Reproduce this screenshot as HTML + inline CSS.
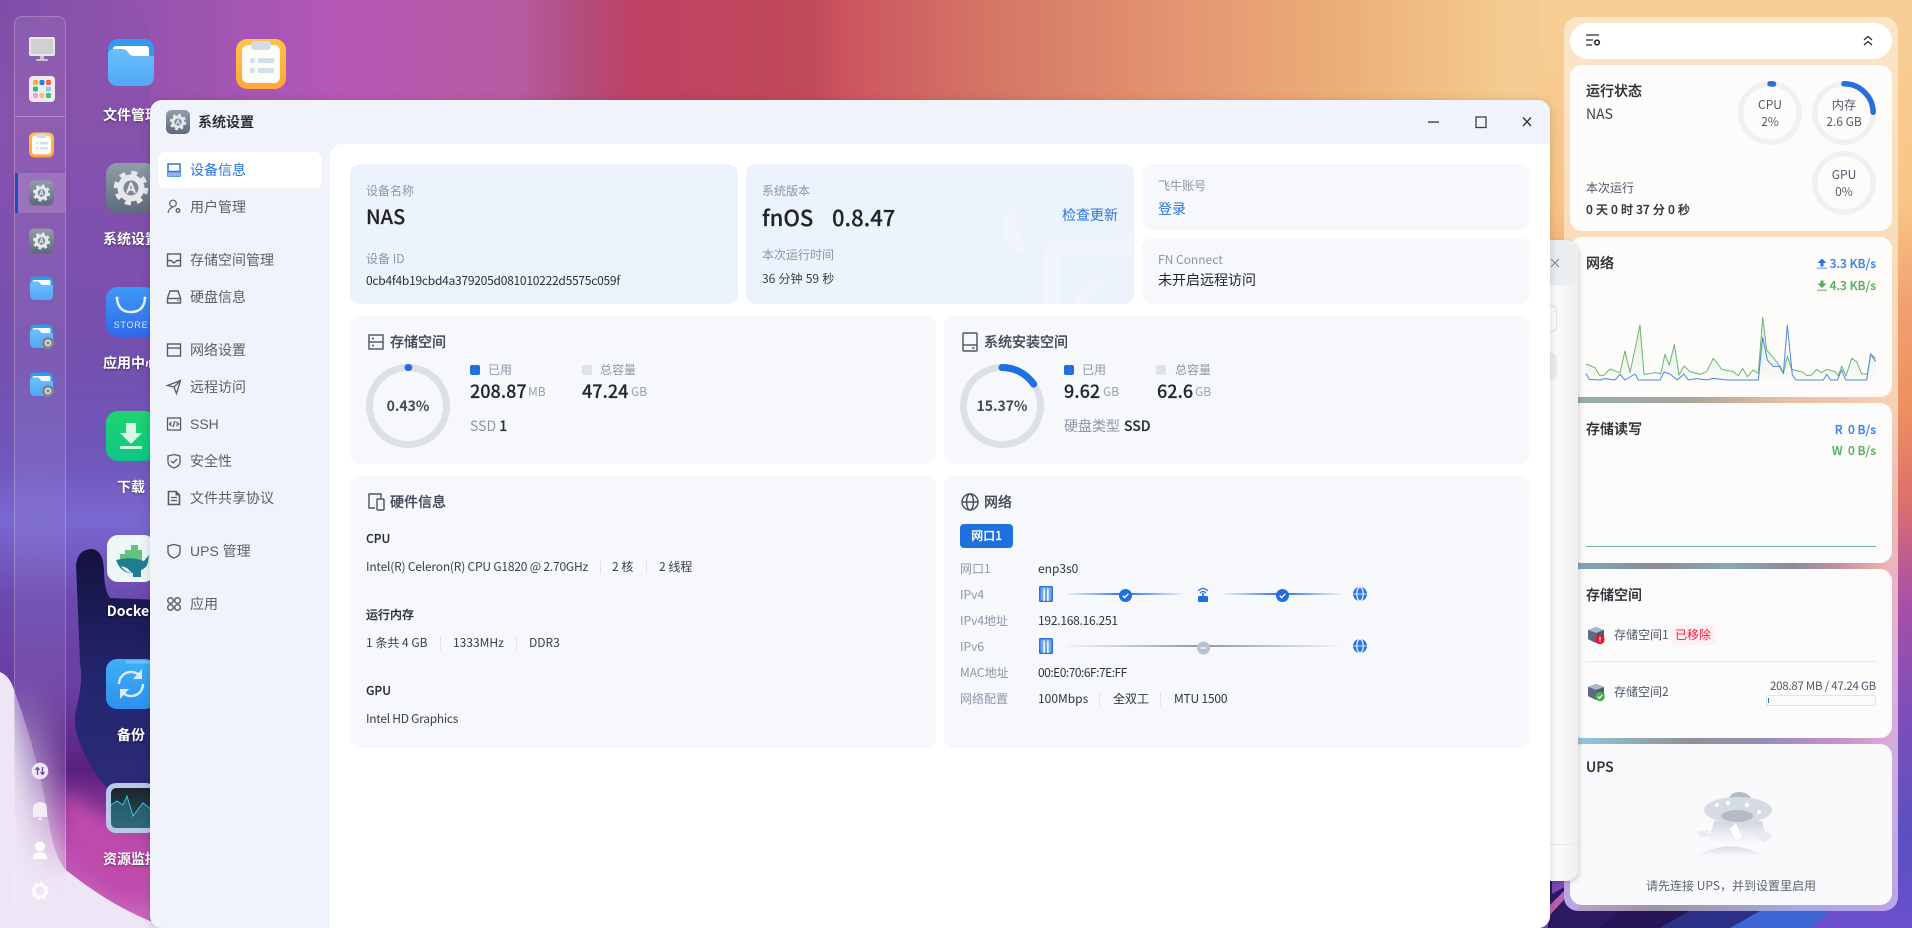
<!DOCTYPE html>
<html lang="zh-CN"><head><meta charset="utf-8"><title>系统设置</title>
<style>
*{box-sizing:border-box}
html,body{margin:0;padding:0;width:1912px;height:928px;overflow:hidden;background:#7b50aa}
body{position:relative;font-family:"Noto Sans CJK SC","Liberation Sans",sans-serif;font-size:12px;color:#2a2f38}
.a{position:absolute}
.t{position:absolute;line-height:20px;height:20px;white-space:nowrap}
svg{position:absolute;overflow:visible}
.lb{color:#fff;font-size:14px;font-weight:700;text-shadow:0 1px 2px rgba(0,0,0,.45);width:100px;text-align:center;left:81px}
.g{color:#8c96a6}
.n{font-size:14px;color:#5b616c;left:190px;font-family:"Liberation Sans","Noto Sans CJK SC",sans-serif}
.card{position:absolute;border-radius:10px;background:#f6f8fc}
.h{font-size:14px;font-weight:500;color:#434a57}
.v{font-size:18px;font-weight:500;color:#222831}
.u{font-size:12px;color:#97a1b0}
.sq{position:absolute;width:10px;height:10px;border-radius:2px}
.sep{position:absolute;width:1px;height:14px;background:#dfe3ea}
.w{position:absolute;left:1570px;width:322px;background:#fdfcfb;border-radius:12px}
.s{position:absolute;left:1578px;width:314px;height:7px}
.ti{font-size:14px;font-weight:500;color:#2c2f36;left:1586px}
.ri{color:#515a69;width:60px;text-align:center}
.h,.v,.ti,[style*="font-weight:500"]{-webkit-text-stroke:.18px currentColor}
.lsa{letter-spacing:-.2px}
</style></head><body>

<svg width="1912" height="928" style="left:0;top:0">
<defs>
<linearGradient id="bgH" x1="0" x2="1912" y1="0" y2="0" gradientUnits="userSpaceOnUse">
<stop offset="0" stop-color="#7c4ea8"/><stop offset=".08" stop-color="#9554ae"/><stop offset=".178" stop-color="#b558b6"/><stop offset=".272" stop-color="#b85aa0"/><stop offset=".3" stop-color="#b05080"/><stop offset=".332" stop-color="#c04065"/><stop offset=".422" stop-color="#c04a58"/><stop offset=".442" stop-color="#cc5560"/><stop offset=".523" stop-color="#d57865"/><stop offset=".605" stop-color="#e29270"/><stop offset=".706" stop-color="#ecb078"/><stop offset=".788" stop-color="#f4cb90"/><stop offset="1" stop-color="#f8cf92"/>
</linearGradient>
<linearGradient id="bgL" x1="0" x2="0" y1="0" y2="928" gradientUnits="userSpaceOnUse">
<stop offset="0" stop-color="#8752ac" stop-opacity="0"/><stop offset=".12" stop-color="#8752ac"/><stop offset=".27" stop-color="#7e50ae"/><stop offset=".38" stop-color="#7450ae"/><stop offset=".5" stop-color="#7058bc"/><stop offset=".56" stop-color="#7a68d0"/><stop offset=".65" stop-color="#6a48ae"/><stop offset=".75" stop-color="#6a3ca0"/><stop offset=".83" stop-color="#5a2080"/><stop offset=".92" stop-color="#b850b0"/><stop offset="1" stop-color="#cc6cbc"/>
</linearGradient>
<linearGradient id="bgR" x1="0" x2="0" y1="0" y2="928" gradientUnits="userSpaceOnUse">
<stop offset="0" stop-color="#f7cf96"/><stop offset=".22" stop-color="#f8c587"/><stop offset=".33" stop-color="#f0a070"/><stop offset=".44" stop-color="#ee9060"/><stop offset=".54" stop-color="#dc706c"/><stop offset=".65" stop-color="#a84fa8"/><stop offset=".76" stop-color="#7f4fb8"/><stop offset=".9" stop-color="#5a50c0"/><stop offset="1" stop-color="#6a50cc"/>
</linearGradient>
<linearGradient id="navy" x1="0" x2="0" y1="0" y2="1"><stop offset="0" stop-color="#14123e"/><stop offset=".5" stop-color="#232670"/><stop offset="1" stop-color="#2e2c78"/></linearGradient>
<linearGradient id="fold" x1="0" x2="0" y1="0" y2="1"><stop offset="0" stop-color="#6ac0fb"/><stop offset="1" stop-color="#52a8f5"/></linearGradient>
<linearGradient id="steel" x1="0" x2="0" y1="0" y2="1"><stop offset="0" stop-color="#929dab"/><stop offset="1" stop-color="#5e6a7b"/></linearGradient>
<linearGradient id="note" x1="0" x2="0" y1="0" y2="1"><stop offset="0" stop-color="#ffc347"/><stop offset="1" stop-color="#ffa63a"/></linearGradient>
<linearGradient id="store" x1="0" x2="0" y1="0" y2="1"><stop offset="0" stop-color="#3d9af7"/><stop offset="1" stop-color="#3069ea"/></linearGradient>
<linearGradient id="green" x1="0" x2="0" y1="0" y2="1"><stop offset="0" stop-color="#1fd56f"/><stop offset="1" stop-color="#0fc585"/></linearGradient>
<linearGradient id="bk" x1="0" x2="0" y1="0" y2="1"><stop offset="0" stop-color="#3fb0f8"/><stop offset="1" stop-color="#2f90ee"/></linearGradient>
<linearGradient id="mon" x1="0" x2="0" y1="0" y2="1"><stop offset="0" stop-color="#1b2429"/><stop offset="1" stop-color="#2a5566"/></linearGradient>
<linearGradient id="gf" x1="0" x2="0" y1="0" y2="1"><stop offset="0" stop-color="#5cae5f" stop-opacity=".22"/><stop offset="1" stop-color="#5cae5f" stop-opacity=".02"/></linearGradient>
<linearGradient id="beam" x1="0" x2="0" y1="0" y2="1"><stop offset="0" stop-color="#ccd3df"/><stop offset="1" stop-color="#ccd3df" stop-opacity="0"/></linearGradient>
<linearGradient id="gnd" x1="0" x2="0" y1="0" y2="1"><stop offset="0" stop-color="#d2d7e1"/><stop offset="1" stop-color="#d2d7e1" stop-opacity="0"/></linearGradient>
<filter id="b8" x="-50%" y="-50%" width="200%" height="200%"><feGaussianBlur stdDeviation="8"/></filter>

<symbol id="gear" viewBox="0 0 50 50">
<rect width="50" height="50" rx="11" fill="url(#steel)"/>
<circle cx="25" cy="25" r="15" fill="none" stroke="#e6e8ec" stroke-width="4.5" stroke-dasharray="5.9 5.9"/>
<circle cx="25" cy="25" r="13.5" fill="#e6e8ec"/>
<circle cx="25" cy="25" r="7.5" fill="#7d8999"/>
<path d="M25 19.5L21 30M25 19.5L29 30M22 27.5Q25 25.5 28 27.5" stroke="#e6e8ec" stroke-width="2" fill="none"/>
</symbol>
<symbol id="folder" viewBox="0 0 46 48">
<rect width="46" height="47" rx="10" fill="#2f9bf0"/>
<rect x="5" y="7" width="36" height="24" rx="3" fill="#fff"/>
<path d="M0 16Q0 10 6 10H14Q18 10 20 13Q22 17 26 17H46V37Q46 47 36 47H10Q0 47 0 37Z" fill="url(#fold)"/>
</symbol>
<symbol id="notes" viewBox="0 0 50 50">
<rect width="50" height="50" rx="11" fill="url(#note)"/>
<rect x="6" y="6" width="38" height="38" rx="6" fill="#fdfcf8"/>
<rect x="15" y="2" width="20" height="9" rx="4" fill="#cfdde8"/>
<rect x="14" y="19" width="5" height="5" rx="1.5" fill="#d2e0ec"/><rect x="22" y="19" width="16" height="5" rx="1.5" fill="#d2e0ec"/>
<rect x="14" y="29" width="5" height="5" rx="1.5" fill="#d2e0ec"/><rect x="22" y="29" width="16" height="5" rx="1.5" fill="#d2e0ec"/>
</symbol>
<symbol id="cube" viewBox="0 0 18 18">
<path d="M1 4L9 1L17 4V13L9 17L1 13Z" fill="#4f5a6c"/><path d="M1 4L9 1L17 4L9 7Z" fill="#a9bacb"/><path d="M9 7V17L1 13V4Z" fill="#5d6a7e"/>
</symbol>
<symbol id="port" viewBox="0 0 14 16">
<rect width="14" height="16" rx="1.5" fill="#2a74e0"/><rect x="1.5" y="1.5" width="11" height="13" fill="#cfe0f8"/><rect x="1.5" y="1.5" width="3" height="13" fill="#2a74e0" opacity=".55"/><rect x="5.8" y="1.5" width="2.4" height="13" fill="#2a74e0" opacity=".55"/><rect x="9.5" y="1.5" width="3" height="13" fill="#2a74e0" opacity=".55"/><rect x="4.4" y="4" width="1.4" height="11" fill="#fff"/><rect x="8.2" y="4" width="1.4" height="11" fill="#fff"/>
</symbol>
<symbol id="globe" viewBox="0 0 14 14">
<circle cx="7" cy="7" r="7" fill="#2a74e0"/><ellipse cx="7" cy="7" rx="3.2" ry="6.8" fill="none" stroke="#f6f8fc" stroke-width="1.2"/><path d="M0 7H14" stroke="#f6f8fc" stroke-width=".8"/>
</symbol>
<symbol id="check" viewBox="0 0 13 13">
<circle cx="6.5" cy="6.5" r="6.5" fill="#1f6fe0"/><path d="M3.7 6.7L5.7 8.6L9.3 4.8" fill="none" stroke="#fff" stroke-width="1.4"/>
</symbol>
</defs>

<rect width="1912" height="928" fill="url(#bgH)"/>
<rect x="0" y="0" width="150" height="928" fill="url(#bgL)"/>
<rect x="1540" y="0" width="372" height="928" fill="url(#bgR)"/>
<!-- magenta below swirl -->
<path d="M66 790Q110 830 150 840V900H120Q90 880 66 840Z" fill="#c048ac" filter="url(#b8)"/>
<!-- navy swirl -->
<path d="M76 565Q78 549 92 549Q103 550 104 570Q104 590 110 598L160 600V816Q120 805 100 780Q72 740 75 714Q84 680 80 664Q78 610 76 565Z" fill="url(#navy)"/>
<!-- pale blob bottom left -->
<path d="M0 672Q10 676 14 690Q40 760 50 830Q56 860 66 870Q110 905 150 921L170 928H0Z" fill="#ece6f6"/>
<!-- bottom right wallpaper -->
<path d="M1548 880H1620V928H1548Z" fill="#2c1a62"/>
<path d="M1550 905L1570 885V893L1550 915Z" fill="#c060b0"/>
<path d="M1552 880L1566 878V886L1552 894Z" fill="#7a4cb8"/>
<path d="M1620 911H1690L1660 928H1598Z" fill="#241556"/>
<path d="M1740 911H1830L1810 928H1720Z" fill="#3d66d4"/>
<path d="M1690 911H1760L1730 928H1660Z" fill="#2b2f86"/>
<path d="M1830 911H1912V928H1810Z" fill="#6a50cc"/>
</svg>

<!-- desktop icons -->
<svg width="46" height="48" style="left:108px;top:39px"><use href="#folder" width="46" height="48"/></svg>
<svg width="50" height="50" style="left:236px;top:39px"><use href="#notes" width="50" height="50"/></svg>
<svg width="50" height="50" style="left:106px;top:163px"><use href="#gear" width="50" height="50"/></svg>
<svg width="50" height="50" style="left:106px;top:287px"><rect width="50" height="50" rx="12" fill="url(#store)"/><path d="M11 11Q12 25 25 25Q38 25 39 11" fill="none" stroke="#e6f0ff" stroke-width="2.4"/><circle cx="11" cy="11" r="1.4" fill="#fff"/><circle cx="39" cy="11" r="1.4" fill="#fff"/><text x="25" y="41" text-anchor="middle" font-size="9" font-family="Liberation Sans" fill="#d8e8ff" letter-spacing=".8">STORE</text></svg>
<svg width="50" height="50" style="left:106px;top:411px"><rect width="50" height="50" rx="12" fill="url(#green)"/><path d="M20 12H30V22H36L25 33L14 22H20Z" fill="#d8f8e6"/><rect x="14" y="35" width="22" height="3" fill="#cdf5de"/></svg>
<svg width="48" height="47" style="left:107px;top:535px"><rect width="48" height="47" rx="11" fill="#eef7f7"/><path d="M13 19H18V15H24V10H31V15H35V25H13Z" fill="#62c47a"/><path d="M9 25Q24 21 37 26L42 20L41 27Q40 33 34 35V42H26V38Q14 39 9 25Z" fill="#1f7d92"/><path d="M14 31Q17 37 25 38L20 33Z" fill="#e4f4f6"/></svg>
<svg width="50" height="50" style="left:106px;top:659px"><rect width="50" height="50" rx="11" fill="url(#bk)"/><path d="M20 3H46" stroke="#6cc2fa" stroke-width="3"/><path d="M13 25A12 12 0 0 1 33 16M37 25A12 12 0 0 1 17 34" fill="none" stroke="#d8ecfc" stroke-width="2.4"/><path d="M36 10V20H27Z M14 40V30H23Z" fill="#d8ecfc"/></svg>
<svg width="50" height="50" style="left:106px;top:783px"><rect width="50" height="50" rx="10" fill="#b9c9e9"/><rect x="5" y="5" width="42" height="40" rx="5" fill="url(#mon)"/><path d="M5 22L11 18L17 22L21 13L27 33L37 20L47 28V40Q47 45 42 45H10Q5 45 5 40Z" fill="#2d7788" opacity=".6"/><path d="M5 22L11 18L17 22L21 13L27 33L37 20L47 28" fill="none" stroke="#3fc4dc" stroke-width="1"/></svg>
<div class="t lb" style="top:105px">文件管理</div>
<div class="t lb" style="top:229px">系统设置</div>
<div class="t lb" style="top:353px">应用中心</div>
<div class="t lb" style="top:477px">下载</div>
<div class="t lb" style="top:601px">Docker</div>
<div class="t lb" style="top:725px">备份</div>
<div class="t lb" style="top:849px">资源监控</div>

<!-- dock -->
<div class="a" style="left:14px;top:16px;width:52px;height:896px;border-radius:8px;background:rgba(255,255,255,.07);border:1px solid rgba(255,255,255,.22);backdrop-filter:blur(20px)"></div>
<div class="a" style="left:15px;top:116px;width:50px;height:1px;background:rgba(255,255,255,.28)"></div>
<div class="a" style="left:15px;top:173px;width:50px;height:40px;background:rgba(255,255,255,.14)"></div>
<div class="a" style="left:15px;top:173px;width:3px;height:40px;background:#1d4fb5"></div>
<svg width="26" height="26" style="left:29px;top:36px"><rect x="0" y="1" width="26" height="19" rx="2" fill="#e8e8e8"/><rect x="2" y="3" width="22" height="15" fill="#d0d0d0"/><rect x="11" y="20" width="4" height="3" fill="#c8c8c8"/><rect x="7" y="23" width="12" height="2" rx="1" fill="#c8c8c8"/></svg>
<svg width="26" height="26" style="left:29px;top:76px"><rect width="26" height="26" rx="4" fill="#f2e8f2"/><rect x="4" y="4" width="5" height="5" rx="1.5" fill="#fbb03b"/><rect x="10.5" y="4" width="5" height="5" rx="1.5" fill="#2a7de1"/><rect x="17" y="4" width="5" height="5" rx="1.5" fill="#f0654a"/><rect x="4" y="10.5" width="5" height="5" rx="1.5" fill="#1fc37a"/><rect x="10.5" y="10.5" width="5" height="5" rx="1.5" fill="#eee"/><rect x="17" y="10.5" width="5" height="5" rx="1.5" fill="#7ed0f5"/><rect x="4" y="17" width="5" height="5" rx="1.5" fill="#f0a0d0"/><rect x="10.5" y="17" width="5" height="5" rx="1.5" fill="#f8c068"/><rect x="17" y="17" width="5" height="5" rx="1.5" fill="#4cbb6c"/></svg>
<svg width="25" height="26" style="left:29px;top:132px"><use href="#notes" width="25" height="26"/></svg>
<svg width="25" height="26" style="left:29px;top:180px"><use href="#gear" width="25" height="26"/></svg>
<svg width="25" height="26" style="left:29px;top:228px"><use href="#gear" width="25" height="26"/></svg>
<svg width="23" height="25" style="left:30px;top:276px"><use href="#folder" width="23" height="25"/></svg>
<svg width="23" height="25" style="left:30px;top:324px"><use href="#folder" width="23" height="25"/><circle cx="18" cy="19" r="6" fill="#7d8794"/><circle cx="18" cy="19" r="2.5" fill="none" stroke="#e6e8ea" stroke-width="1.5"/></svg>
<svg width="23" height="25" style="left:30px;top:372px"><use href="#folder" width="23" height="25"/><circle cx="18" cy="19" r="6" fill="#7d8794"/><circle cx="18" cy="19" r="2.5" fill="none" stroke="#e6e8ea" stroke-width="1.5"/></svg>
<svg width="18" height="18" style="left:31px;top:762px"><circle cx="9" cy="9" r="8.3" fill="#eee6f3"/><path d="M6.5 13V6M4.5 8L6.5 5.5L8.5 8M11.5 5V12M9.5 10L11.5 12.5L13.5 10" fill="none" stroke="#6c4a96" stroke-width="1.3"/></svg>
<svg width="16" height="20" style="left:32px;top:801px"><path d="M1 16V8Q1 1 8 1Q15 1 15 8V16Z" fill="#f4ecf7"/><rect x="6" y="17" width="4" height="2" rx="1" fill="#f4ecf7"/></svg>
<svg width="16" height="20" style="left:32px;top:841px"><circle cx="8" cy="5.5" r="5" fill="#fff" opacity=".95"/><path d="M1 18Q1 11 8 11Q15 11 15 18Z" fill="#fff" opacity=".95"/></svg>
<svg width="18" height="18" style="left:31px;top:882px"><circle cx="9" cy="9" r="6" fill="none" stroke="#fff" stroke-opacity=".85" stroke-width="3"/><circle cx="9" cy="9" r="7.5" fill="none" stroke="#fff" stroke-opacity=".85" stroke-width="2.4" stroke-dasharray="3 2.9"/></svg>

<!-- widget panel -->
<div class="a" style="left:1564px;top:17px;width:334px;height:894px;border-radius:14px;background:linear-gradient(180deg,#fbe6c8 0%,#fadcba 25%,#f8d2b8 42%,#efb8b0 55%,#dcaedc 75%,#b8a6e6 100%)"></div>
<div class="s" style="top:397px;height:6px;background:linear-gradient(90deg,#93b0a8,#aaa49c 35%,#e6bd9f 65%,#f8cfb0)"></div>
<div class="s" style="top:563px;height:6px;background:linear-gradient(90deg,#7ea8b8,#8a8a9a 25%,#88a8b8 48%,#8a8a9a 68%,#c090a0 82%,#f0b8b0)"></div>
<div class="s" style="top:738px;height:6px;background:linear-gradient(90deg,#90c8d8,#909098 35%,#9090b0 58%,#c090c0 80%,#e0a8d8)"></div>
<div class="a" style="left:1578px;top:905px;width:300px;height:6px;background:linear-gradient(90deg,#b8a0c8,#9c93a6 25%,#a0a0c8 55%,#a8a8ea 75%,#b8a6e6)"></div>
<div class="w" style="top:23px;height:36px;border-radius:18px;background:#fff"></div>
<div class="w" style="top:65px;height:166px"></div>
<div class="w" style="top:237px;height:160px"></div>
<div class="w" style="top:403px;height:160px;background:#fbfbfb"></div>
<div class="w" style="top:569px;height:169px;background:#fbfbfc"></div>
<div class="w" style="top:744px;height:161px;background:#fafafc"></div>

<svg width="16" height="14" style="left:1586px;top:34px"><path d="M0 1H13M0 6H7M0 11H6" stroke="#2a2f38" stroke-width="1.3"/><circle cx="11" cy="8.5" r="2.3" fill="none" stroke="#2a2f38" stroke-width="1.6"/></svg>
<svg width="12" height="12" style="left:1862px;top:35px"><path d="M2 5L6 1.5L10 5M2 10L6 6.5L10 10" fill="none" stroke="#2a2f38" stroke-width="1.3"/></svg>

<div class="t ti" style="top:81px">运行状态</div>
<div class="t" style="left:1586px;top:104px;font-size:14px;color:#3a3f49">NAS</div>
<div class="t" style="left:1586px;top:178px;color:#4f5866">本次运行</div>
<div class="t" style="left:1586px;top:200px;font-weight:500;color:#2e323a;word-spacing:.4px">0 天 0 时 37 分 0 秒</div>
<svg width="64" height="64" style="left:1738px;top:81px"><circle cx="32" cy="32" r="29.2" fill="none" stroke="#f0f1f3" stroke-width="5.5"/><circle cx="32" cy="32" r="29.2" fill="none" stroke="#2a6ede" stroke-width="5.5" stroke-linecap="round" stroke-dasharray="3.6 200" transform="rotate(-90 32 32)"/></svg>
<svg width="64" height="64" style="left:1812px;top:81px"><circle cx="32" cy="32" r="29.2" fill="none" stroke="#f0f1f3" stroke-width="5.5"/><circle cx="32" cy="32" r="29.2" fill="none" stroke="#2a6ede" stroke-width="5.5" stroke-linecap="round" stroke-dasharray="45 200" transform="rotate(-90 32 32)"/></svg>
<svg width="64" height="64" style="left:1812px;top:151px"><circle cx="32" cy="32" r="29.2" fill="none" stroke="#f0f1f3" stroke-width="5.5"/></svg>
<div class="t ri" style="left:1740px;top:95px">CPU</div><div class="t ri" style="left:1740px;top:112px">2%</div>
<div class="t ri" style="left:1814px;top:95px">内存</div><div class="t ri" style="left:1814px;top:112px">2.6 GB</div>
<div class="t ri" style="left:1814px;top:165px">GPU</div><div class="t ri" style="left:1814px;top:182px">0%</div>

<div class="t ti" style="top:253px">网络</div>
<svg width="12" height="12" style="left:1816px;top:258px"><path d="M6 .5L10.5 5H7.5V8.5H4.5V5H1.5Z" fill="#2a74e0"/><rect x="1" y="9.5" width="10" height="1.6" fill="#2a74e0" opacity=".5"/></svg>
<div class="t" style="right:36px;top:254px;color:#3a84ea;font-weight:500">3.3 KB/s</div>
<svg width="12" height="12" style="left:1816px;top:280px"><path d="M6 8L10.5 3.5H7.5V.5H4.5V3.5H1.5Z" fill="#56a85a"/><rect x="1" y="9.5" width="10" height="1.6" fill="#56a85a" opacity=".6"/></svg>
<div class="t" style="right:36px;top:276px;color:#5cae5f;font-weight:500">4.3 KB/s</div>
<svg width="372" height="400" viewBox="0 0 1116 1200" style="left:1540px;top:0">
<polygon fill="url(#gf)" points="138,1092 165,1103 178,1125 190,1127 210,1107 240,1118 255,1053 270,1118 300,975 312,1123 350,1118 362,1122 375,1063 388,1095 403,1033 417,1125 432,1098 450,1115 480,1123 500,1115 520,1075 545,1108 580,1115 595,1128 608,1105 622,1130 640,1110 655,1120 668,952 680,1050 710,1085 730,1120 742,1068 755,1108 790,1117 800,1127 815,1125 830,1108 845,1118 860,1108 885,1115 895,1127 905,1098 918,1128 935,1075 950,1085 965,1122 982,1122 992,1062 1007,1075 1007,1140 138,1140"/>
<polyline fill="none" stroke="#6db56e" stroke-width="3" stroke-linejoin="round" points="138,1092 165,1103 178,1125 190,1127 210,1107 240,1118 255,1053 270,1118 300,975 312,1123 350,1118 362,1122 375,1063 388,1095 403,1033 417,1125 432,1098 450,1115 480,1123 500,1115 520,1075 545,1108 580,1115 595,1128 608,1105 622,1130 640,1110 655,1120 668,952 680,1050 710,1085 730,1120 742,1068 755,1108 790,1117 800,1127 815,1125 830,1108 845,1118 860,1108 885,1115 895,1127 905,1098 918,1128 935,1075 950,1085 965,1122 982,1122 992,1062 1007,1075"/>
<polyline fill="none" stroke="#4a88e4" stroke-width="3" stroke-linejoin="round" points="138,1120 148,1138 180,1140 195,1136 225,1140 240,1123 255,1140 285,1122 295,1140 360,1140 372,1116 390,1122 412,1140 432,1122 445,1140 470,1136 500,1140 520,1135 560,1140 655,1140 668,1012 682,1080 700,1100 720,1098 730,1120 742,975 757,1125 768,1140 850,1140 860,1123 872,1140 892,1140 905,1110 917,1140 980,1140 992,1062 1007,1085"/>
</svg>

<div class="t ti" style="top:419px">存储读写</div>
<div class="t" style="right:36px;top:420px;color:#3a84ea;font-weight:500">R&nbsp;&nbsp;0 B/s</div>
<div class="t" style="right:36px;top:441px;color:#5cae5f;font-weight:500">W&nbsp;&nbsp;0 B/s</div>
<div class="a" style="left:1586px;top:546px;width:290px;height:1px;background:#6db59a"></div>

<div class="t ti" style="top:585px">存储空间</div>
<svg width="18" height="18" style="left:1587px;top:626px"><use href="#cube" width="18" height="18"/><circle cx="13" cy="13.5" r="4.6" fill="#ee1133"/><rect x="12.4" y="10.8" width="1.2" height="3.4" fill="#fff"/><rect x="12.4" y="14.8" width="1.2" height="1.2" fill="#fff"/></svg>
<div class="t" style="left:1614px;top:625px;color:#4f5866">存储空间1</div>
<div class="a" style="left:1671px;top:625px;width:44px;height:20px;background:#fff0f1;border-radius:5px"></div>
<div class="t" style="left:1675px;top:625px;color:#f0203c">已移除</div>
<div class="a" style="left:1586px;top:661px;width:290px;height:1px;background:#e6e9ee"></div>
<svg width="18" height="18" style="left:1587px;top:683px"><use href="#cube" width="18" height="18"/><circle cx="13" cy="13.5" r="4.8" fill="#4caf50"/><path d="M10.8 13.5L12.5 15.2L15.3 12" fill="none" stroke="#fff" stroke-width="1.1"/></svg>
<div class="t" style="left:1614px;top:682px;color:#4f5866">存储空间2</div>
<div class="t" style="right:36px;top:676px;color:#4f5866;font-size:11.5px;letter-spacing:-.25px">208.87 MB / 47.24 GB</div>
<div class="a" style="left:1766px;top:695px;width:110px;height:11px;border:1px solid #dfe3ec;border-radius:2px;background:#fbfbfc"></div>
<div class="a" style="left:1768px;top:698px;width:1px;height:5px;background:#2a74e0"></div>

<div class="t" style="left:1586px;top:757px;font-size:14px;font-weight:500;color:#2c2f36">UPS</div>
<svg width="90" height="70" style="left:1690px;top:785px;opacity:.9">
<path d="M37 17Q40 7 49 7Q60 7 63 17Z" fill="#aeb6c4"/>
<path d="M24 36H72L78 58H18Z" fill="url(#beam)"/>
<ellipse cx="48" cy="25" rx="34" ry="13" fill="#d2d8e2"/>
<ellipse cx="47" cy="31" rx="16" ry="6" fill="#adb5c2"/>
<circle cx="27" cy="20" r="2" fill="#fff"/><circle cx="38" cy="18" r="2.2" fill="#fff"/><circle cx="57" cy="20" r="2.2" fill="#fff"/><circle cx="69" cy="27" r="2" fill="#fff"/>
<path d="M40 44L46 38L52 52L46 55Z" fill="#fff"/>
<path d="M6 47L18 45L20 51L10 52Z M66 52L78 46L82 52L74 57Z" fill="#e6eaf2"/>
<path d="M6 71Q40 52 76 71Z" fill="url(#gnd)"/>
</svg>
<div class="t" style="left:1631px;width:200px;text-align:center;top:876px;color:#5b6573">请先连接 UPS，并到设置里启用</div>

<!-- second window -->
<div class="a" style="left:1400px;top:240px;width:178px;height:641px;border-radius:12px;background:#fff;box-shadow:1px 2px 6px rgba(0,0,0,.18);overflow:hidden">
<div class="a" style="left:0;top:0;width:178px;height:45px;background:#eaeef4"></div>
<div class="a" style="left:120px;top:65px;width:37px;height:27px;border:1px solid #dfe3e8;border-radius:6px"></div>
<div class="a" style="left:120px;top:113px;width:37px;height:27px;background:#eef0f3;border-radius:6px"></div>
<div class="a" style="left:0;top:604px;width:178px;height:1px;background:#e6e8ec"></div>
<div class="a" style="left:150px;top:0;width:28px;height:641px;background:linear-gradient(270deg,rgba(238,238,238,.9),rgba(255,255,255,0))"></div>
<svg width="10" height="10" style="left:150px;top:18px"><path d="M1 1L9 9M9 1L1 9" stroke="#7c828c" stroke-width="1"/></svg>
</div>

<!-- main window -->
<div class="a" style="left:150px;top:100px;width:1400px;height:828px;border-radius:12px;background:#f0f3f9;box-shadow:0 2px 10px rgba(0,0,0,.18)"></div>
<div class="a" style="left:330px;top:144px;width:1220px;height:784px;border-radius:12px 0 12px 0;background:#fff"></div>

<svg width="24" height="24" style="left:166px;top:110px"><use href="#gear" width="24" height="24"/></svg>
<div class="t" style="left:198px;top:112px;font-size:14px;font-weight:500;color:#23272e">系统设置</div>
<svg width="100" height="16" style="left:1428px;top:114px"><rect x="0" y="7.3" width="11" height="1.5" fill="#4a4f58"/><rect x="48" y="3" width="10" height="10.5" fill="none" stroke="#3a3f48" stroke-width="1.3"/><path d="M95 3.5L103 12M103 3.5L95 12" stroke="#2c3038" stroke-width="1.3"/></svg>

<!-- sidebar -->
<div class="a" style="left:158px;top:152px;width:164px;height:36px;background:#fff;border-radius:7px"></div>
<svg width="16" height="16" style="left:166px;top:162px" fill="none" stroke="#2a74e0" stroke-width="1.5"><rect x="2" y="2" width="12" height="12"/><rect x="2" y="9.5" width="12" height="4.5" fill="#8ab2ef" stroke="none"/><path d="M2 9.5H14"/></svg>
<div class="t n" style="top:160px;color:#2a74e0">设备信息</div>
<svg width="16" height="16" style="left:166px;top:199px" fill="none" stroke="#5b616c" stroke-width="1.2"><circle cx="7" cy="4.5" r="3.3"/><path d="M2 14Q3 9 7 8.3"/><circle cx="12" cy="11.5" r="1.8" stroke-width="1.4"/></svg>
<div class="t n" style="top:197px">用户管理</div>
<svg width="16" height="16" style="left:166px;top:252px" fill="none" stroke="#555c68" stroke-width="1.4"><rect x="1.5" y="2" width="13" height="12"/><path d="M1.5 8.5H5L8 11L11 8.5H14.5"/></svg>
<div class="t n" style="top:250px">存储空间管理</div>
<svg width="16" height="16" style="left:166px;top:289px" fill="none" stroke="#555c68" stroke-width="1.4"><path d="M4 2H12L14.5 9V14H1.5V9Z"/><path d="M1.5 9.5H14.5"/><rect x="11" y="11" width="1.5" height="1.2" fill="#555c68" stroke="none"/></svg>
<div class="t n" style="top:287px">硬盘信息</div>
<svg width="16" height="16" style="left:166px;top:342px" fill="none" stroke="#555c68" stroke-width="1.4"><rect x="1.5" y="2" width="13" height="12"/><path d="M1.5 6H14.5"/></svg>
<div class="t n" style="top:340px">网络设置</div>
<svg width="16" height="16" style="left:166px;top:379px" fill="none" stroke="#555c68" stroke-width="1.3"><path d="M1.5 6.5L14.5 1.5L10.5 14.5L8 8Z"/><path d="M8 8L14.5 1.5"/></svg>
<div class="t n" style="top:377px">远程访问</div>
<svg width="16" height="16" style="left:166px;top:416px" fill="none" stroke="#555c68" stroke-width="1.3"><rect x="1.5" y="2" width="13" height="12"/><path d="M5.5 6L3.5 8L5.5 10M10.5 6L12.5 8L10.5 10M9 5L7 11"/></svg>
<div class="t n" style="top:414px">SSH</div>
<svg width="16" height="16" style="left:166px;top:453px" fill="none" stroke="#555c68" stroke-width="1.3"><path d="M8 1.5L14 3V9Q14 13 8 15Q2 13 2 9V3Z"/><path d="M5 8L7.3 10L11 6"/></svg>
<div class="t n" style="top:451px">安全性</div>
<svg width="16" height="16" style="left:166px;top:490px"><path d="M2.5 1.5H10L13.5 5V14.5H2.5Z" fill="none" stroke="#555c68" stroke-width="1.6"/><path d="M5 7.5H11M5 10.5H11" stroke="#555c68" stroke-width="1.3"/><path d="M9.5 1.5V5.5H13.5" fill="#555c68"/></svg>
<div class="t n" style="top:488px">文件共享协议</div>
<svg width="16" height="16" style="left:166px;top:543px" fill="none" stroke="#555c68" stroke-width="1.4"><path d="M8 1.5L14 3V9Q14 13 8 15Q2 13 2 9V3Z"/></svg>
<div class="t n" style="top:541px">UPS 管理</div>
<svg width="16" height="16" style="left:166px;top:596px" fill="none" stroke="#555c68" stroke-width="1.4"><circle cx="4.5" cy="4.5" r="2.8"/><circle cx="11.5" cy="4.5" r="2.8"/><circle cx="4.5" cy="11.5" r="2.8"/><circle cx="11.5" cy="11.5" r="2.8"/></svg>
<div class="t n" style="top:594px">应用</div>

<!-- top cards -->
<div class="card" style="left:350px;top:164px;width:388px;height:140px;background:#ecf3fc"></div>
<div class="card" style="left:746px;top:164px;width:388px;height:140px;background:#ecf3fc;overflow:hidden">
<svg width="388" height="140" style="left:0;top:0"><path d="M272 39Q252 55 259 78Q268 94 284 84Q266 74 272 39Z" fill="#f1f6fd"/><rect x="306" y="81" width="120" height="100" rx="12" fill="none" stroke="#f0f5fc" stroke-width="16"/><path d="M335 140Q336 120 360 118" fill="none" stroke="#f0f5fc" stroke-width="12"/></svg>
</div>
<div class="card" style="left:1142px;top:164px;width:388px;height:66px"></div>
<div class="card" style="left:1142px;top:238px;width:388px;height:66px"></div>
<div class="t g" style="left:366px;top:181px">设备名称</div>
<div class="t" style="left:366px;top:206px;font-size:20px;font-weight:500;color:#20252d">NAS</div>
<div class="t g" style="left:366px;top:249px">设备 ID</div>
<div class="t" style="left:366px;top:271px;color:#2a2f38;letter-spacing:-.25px">0cb4f4b19cbd4a379205d081010222d5575c059f</div>
<div class="t g" style="left:762px;top:181px">系统版本</div>
<div class="t" style="left:762px;top:207px;font-size:22px;font-weight:500;color:#20252d">fnOS</div>
<div class="t" style="left:832px;top:207px;font-size:22px;font-weight:500;color:#20252d">0.8.47</div>
<div class="t g" style="left:762px;top:245px">本次运行时间</div>
<div class="t" style="left:762px;top:269px;color:#3a3f49;word-spacing:.5px">36 分钟 59 秒</div>
<div class="t" style="left:1062px;top:205px;font-size:14px;color:#2a74e0">检查更新</div>
<div class="t g" style="left:1158px;top:176px">飞牛账号</div>
<div class="t" style="left:1158px;top:199px;font-size:14px;color:#2a74e0">登录</div>
<div class="t g" style="left:1158px;top:250px">FN Connect</div>
<div class="t" style="left:1158px;top:270px;font-size:14px;color:#23272e">未开启远程访问</div>

<!-- storage cards -->
<div class="card" style="left:350px;top:316px;width:586px;height:148px"></div>
<div class="card" style="left:944px;top:316px;width:586px;height:148px"></div>
<svg width="16" height="16" style="left:368px;top:334px" fill="none" stroke="#4b5361" stroke-width="1.4"><rect x="1" y="1" width="14" height="14"/><path d="M1 8H15"/><path d="M4 4.5H6M4 11.5H6"/></svg>
<div class="t h" style="left:390px;top:332px">存储空间</div>
<svg width="84" height="84" style="left:366px;top:364px"><circle cx="42" cy="42" r="38.5" fill="none" stroke="#dde1e7" stroke-width="7"/><circle cx="42" cy="42" r="38.5" fill="none" stroke="#1f6fe0" stroke-width="7" stroke-linecap="round" stroke-dasharray=".8 300" transform="rotate(-90 42 42)"/></svg>
<div class="t" style="left:366px;top:396px;width:84px;text-align:center;font-size:14px;font-weight:700;color:#434a57">0.43%</div>
<div class="sq" style="left:470px;top:365px;background:#1f6fe0"></div>
<div class="t g" style="left:488px;top:360px">已用</div>
<div class="t v" style="left:470px;top:381px">208.87</div><div class="t u" style="left:528px;top:382px">MB</div>
<div class="sq" style="left:582px;top:365px;background:#dfe2e9"></div>
<div class="t g" style="left:600px;top:360px">总容量</div>
<div class="t v" style="left:582px;top:381px">47.24</div><div class="t u" style="left:631px;top:382px">GB</div>
<div class="t" style="left:470px;top:416px;font-size:14px;color:#8c96a6">SSD <span style="color:#2a2f38;font-weight:500">1</span></div>

<svg width="16" height="20" style="left:962px;top:332px" fill="none" stroke="#4b5361" stroke-width="1.4"><rect x="1" y="1" width="14" height="18" rx="1"/><path d="M1 13H15"/><rect x="10" y="15.3" width="2.5" height="1.4" fill="#4b5361" stroke="none"/></svg>
<div class="t h" style="left:984px;top:332px">系统安装空间</div>
<svg width="84" height="84" style="left:960px;top:364px"><circle cx="42" cy="42" r="38.5" fill="none" stroke="#dde1e7" stroke-width="7"/><circle cx="42" cy="42" r="38.5" fill="none" stroke="#1f6fe0" stroke-width="7" stroke-linecap="round" stroke-dasharray="37.2 300" transform="rotate(-90 42 42)"/></svg>
<div class="t" style="left:960px;top:396px;width:84px;text-align:center;font-size:14px;font-weight:700;color:#434a57">15.37%</div>
<div class="sq" style="left:1064px;top:365px;background:#1f6fe0"></div>
<div class="t g" style="left:1082px;top:360px">已用</div>
<div class="t v" style="left:1064px;top:381px">9.62</div><div class="t u" style="left:1103px;top:382px">GB</div>
<div class="sq" style="left:1156px;top:365px;background:#dfe2e9"></div>
<div class="t g" style="left:1175px;top:360px">总容量</div>
<div class="t v" style="left:1157px;top:381px">62.6</div><div class="t u" style="left:1195px;top:382px">GB</div>
<div class="t" style="left:1064px;top:416px;font-size:14px;color:#8c96a6">硬盘类型</div>
<div class="t" style="left:1124px;top:416px;font-size:14px;font-weight:500;color:#2a2f38">SSD</div>

<!-- hardware -->
<div class="card" style="left:350px;top:476px;width:586px;height:272px"></div>
<div class="card" style="left:944px;top:476px;width:586px;height:272px"></div>
<svg width="17" height="18" style="left:368px;top:493px" fill="none" stroke="#4b5361" stroke-width="1.4"><path d="M7 15H1V1H13V5"/><rect x="9" y="6" width="7" height="11" rx="1"/></svg>
<div class="t h" style="left:390px;top:492px">硬件信息</div>
<div class="t" style="left:366px;top:529px;font-weight:500;color:#2a2f38">CPU</div>
<div class="t lsa" style="left:366px;top:557px;color:#3a3f49">Intel(R) Celeron(R) CPU G1820 @ 2.70GHz</div>
<div class="sep" style="left:600px;top:560px"></div>
<div class="t" style="left:612px;top:557px;color:#3a3f49">2 核</div>
<div class="sep" style="left:646px;top:560px"></div>
<div class="t" style="left:659px;top:557px;color:#3a3f49">2 线程</div>
<div class="t" style="left:366px;top:605px;font-weight:500;color:#2a2f38">运行内存</div>
<div class="t" style="left:366px;top:633px;color:#3a3f49">1 条共 4 GB</div>
<div class="sep" style="left:440px;top:636px"></div>
<div class="t" style="left:453px;top:633px;color:#3a3f49">1333MHz</div>
<div class="sep" style="left:516px;top:636px"></div>
<div class="t" style="left:529px;top:633px;color:#3a3f49">DDR3</div>
<div class="t" style="left:366px;top:681px;font-weight:500;color:#2a2f38">GPU</div>
<div class="t" style="left:366px;top:709px;color:#3a3f49;letter-spacing:-.27px">Intel HD Graphics</div>

<!-- network -->
<svg width="18" height="18" style="left:961px;top:493px" fill="none" stroke="#4b5361" stroke-width="1.5"><circle cx="9" cy="9" r="8"/><ellipse cx="9" cy="9" rx="3.5" ry="8"/><path d="M1 9H17"/></svg>
<div class="t h" style="left:984px;top:492px">网络</div>
<div class="a" style="left:960px;top:524px;width:53px;height:24px;background:#1f6fe0;border-radius:4px"></div>
<div class="t" style="left:960px;top:526px;width:53px;text-align:center;color:#fff;font-weight:500">网口1</div>
<div class="t g" style="left:960px;top:559px">网口1</div><div class="t" style="left:1038px;top:559px;color:#2f343d">enp3s0</div>
<div class="t g" style="left:960px;top:585px">IPv4</div>
<div class="t g" style="left:960px;top:611px">IPv4地址</div><div class="t" style="left:1038px;top:611px;color:#2f343d;letter-spacing:-.25px">192.168.16.251</div>
<div class="t g" style="left:960px;top:637px">IPv6</div>
<div class="t g" style="left:960px;top:663px">MAC地址</div><div class="t" style="left:1038px;top:663px;color:#2f343d;letter-spacing:-.5px">00:E0:70:6F:7E:FF</div>
<div class="t g" style="left:960px;top:689px">网络配置</div><div class="t" style="left:1038px;top:689px;color:#2f343d">100Mbps</div>
<div class="sep" style="left:1099px;top:692px"></div><div class="t" style="left:1113px;top:689px;color:#2f343d">全双工</div>
<div class="sep" style="left:1160px;top:692px"></div><div class="t" style="left:1174px;top:689px;color:#2f343d;letter-spacing:-.2px">MTU 1500</div>
<svg width="14" height="16" style="left:1039px;top:586px"><use href="#port" width="14" height="16"/></svg>
<div class="a" style="left:1067px;top:593px;width:116px;height:2px;background:linear-gradient(90deg,rgba(42,110,222,.05),#2a6ede 50%,rgba(42,110,222,.05))"></div>
<svg width="13" height="13" style="left:1119px;top:589px"><use href="#check" width="13" height="13"/></svg>
<svg width="14" height="16" style="left:1196px;top:586px" fill="none"><path d="M2 5Q7 0 12 5M4 7Q7 4 10 7" stroke="#1f6fe0" stroke-width="1.2"/><rect x="2" y="10" width="10" height="6" rx="1" fill="#1f6fe0"/><rect x="6.2" y="7" width="1.6" height="3" fill="#1f6fe0"/></svg>
<div class="a" style="left:1223px;top:593px;width:117px;height:2px;background:linear-gradient(90deg,rgba(42,110,222,.05),#2a6ede 50%,rgba(42,110,222,.05))"></div>
<svg width="13" height="13" style="left:1276px;top:589px"><use href="#check" width="13" height="13"/></svg>
<svg width="14" height="14" style="left:1353px;top:587px"><use href="#globe" width="14" height="14"/></svg>
<svg width="14" height="16" style="left:1039px;top:638px"><use href="#port" width="14" height="16"/></svg>
<div class="a" style="left:1067px;top:645px;width:273px;height:2px;background:linear-gradient(90deg,rgba(143,150,166,.05),#8f96a6 50%,rgba(143,150,166,.05))"></div>
<svg width="13" height="14" style="left:1197px;top:641px"><circle cx="6.5" cy="7" r="6.5" fill="#b6c2d2"/><rect x="3.5" y="6.2" width="6" height="1.6" fill="#eef1f5"/></svg>
<svg width="14" height="14" style="left:1353px;top:639px"><use href="#globe" width="14" height="14"/></svg>
</body></html>
